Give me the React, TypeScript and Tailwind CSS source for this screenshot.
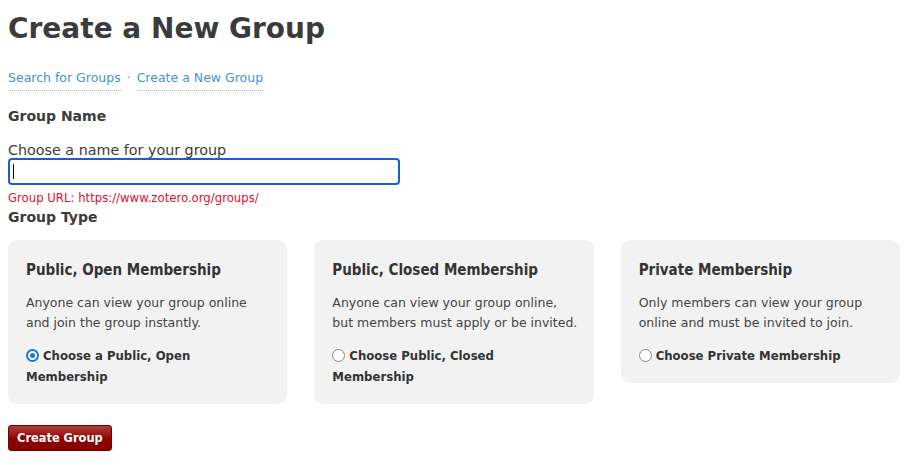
import React from "react";

const COND = '"DejaVu Sans Condensed", "DejaVu Sans", sans-serif';

function Radio({ checked }: { checked?: boolean }) {
  return checked ? (
    <span className="inline-block align-[-2px] mr-[4px] w-[13px] h-[13px] rounded-full border-[2px] border-[#1a73e8] bg-white relative">
      <span className="absolute left-[2px] top-[2px] w-[5px] h-[5px] rounded-full bg-[#1a73e8]" />
    </span>
  ) : (
    <span className="inline-block align-[-2px] mr-[4px] w-[13px] h-[13px] rounded-full border border-[#8a8a8a] bg-white" />
  );
}

function Card({
  title,
  desc,
  label,
  checked,
}: {
  title: string;
  desc: React.ReactNode;
  label: React.ReactNode;
  checked?: boolean;
}) {
  return (
    <div className="bg-[#f2f2f2] rounded-[9px] px-[18px] pt-[20px] pb-[17px]">
      <div className="text-[15px] leading-[20px] font-bold text-[#333]" style={{ fontFamily: COND }}>
        {title}
      </div>
      <div className="mt-[13px] text-[12.5px] leading-[20px] text-[#444] whitespace-nowrap">{desc}</div>
      <div className="mt-[12px] text-[13px] leading-[21px] font-bold text-[#333]" style={{ fontFamily: COND }}>
        <Radio checked={checked} />
        {label}
      </div>
    </div>
  );
}

export default function App() {
  return (
    <div
      className="bg-white min-h-[465px] text-[#3a3a3a] pl-[8px] pr-[13px]"
      style={{ fontFamily: '"DejaVu Sans", Verdana, sans-serif' }}
    >
      <h1 className="pt-[12px] text-[28px] leading-[34px] font-bold text-[#3b3b3b]">
        Create a New Group
      </h1>
      <div className="mt-[24px] text-[12.5px] leading-[16px] flex items-start">
        <a className="text-[#4a8fd8] border-b border-dotted border-[#b8b8b8] pb-[4px]">Search for Groups</a>
        <span className="text-[#999] mx-[6px]">·</span>
        <a className="text-[#4a8fd8] border-b border-dotted border-[#b8b8b8] pb-[4px]">Create a New Group</a>
      </div>
      <div className="mt-[16px] text-[14px] leading-[18px] font-bold text-[#3b3b3b]">Group Name</div>
      <div className="mt-[17px] text-[14.3px] leading-[16px] text-[#3b3b3b]">Choose a name for your group</div>
      <div className="w-[392px] h-[27px] border-[2px] border-[#1a5fd0] rounded-[4px] bg-white flex items-center pl-[3px]">
        <span className="w-px h-[15px] bg-black" />
      </div>
      <div className="mt-[6px] text-[11.7px] leading-[14px] text-[#e0102e]">
        Group URL: https://www.zotero.org/groups/
      </div>
      <div className="mt-[3px] text-[14px] leading-[18px] font-bold text-[#3b3b3b]">Group Type</div>
      <div className="mt-[14px] grid grid-cols-3 gap-[27px] items-start w-[892px]">
        <Card
          title="Public, Open Membership"
          desc={<>Anyone can view your group online<br />and join the group instantly.</>}
          label={<>Choose a Public, Open<br />Membership</>}
          checked
        />
        <Card
          title="Public, Closed Membership"
          desc={<>Anyone can view your group online,<br />but members must apply or be invited.</>}
          label={<>Choose Public, Closed<br />Membership</>}
        />
        <Card
          title="Private Membership"
          desc={<>Only members can view your group<br />online and must be invited to join.</>}
          label={<>Choose Private Membership</>}
        />
      </div>
      <button
        className="mt-[21px] h-[26px] px-[8px] rounded-[3px] border border-[#6e0000] bg-gradient-to-b from-[#b23a3a] via-[#8f0000] to-[#870000] text-white text-[12.7px] font-bold leading-[24px]"
        style={{ fontFamily: COND }}
      >
        Create Group
      </button>
    </div>
  );
}
